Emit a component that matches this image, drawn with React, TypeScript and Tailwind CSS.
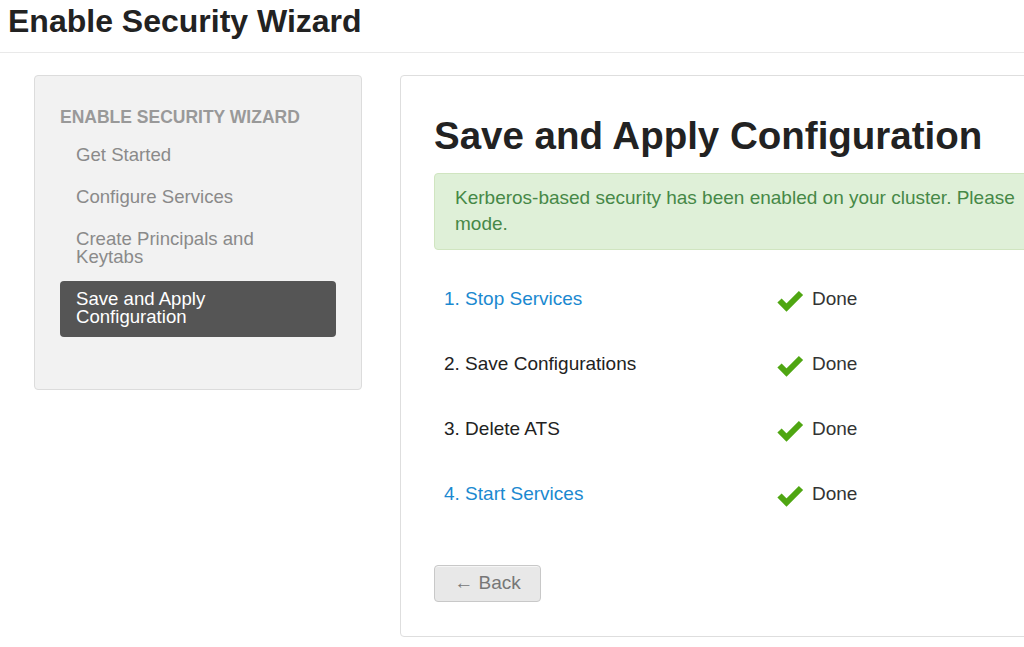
import React from 'react'

const steps = [
  { label: '1. Stop Services', link: true },
  { label: '2. Save Configurations', link: false },
  { label: '3. Delete ATS', link: false },
  { label: '4. Start Services', link: true },
]

const navItems = ['Get Started', 'Configure Services', 'Create Principals and Keytabs']

const CheckIcon = () => (
  <svg width="28" height="24" viewBox="0 0 28 24" className="shrink-0">
    <polyline
      points="3.5,12.5 10.5,19.5 25,5"
      fill="none"
      stroke="#4fa612"
      strokeWidth="6"
      strokeLinejoin="miter"
    />
  </svg>
)

const App: React.FC = () => {
  return (
    <div
      className="w-[1024px] h-[647px] overflow-hidden bg-white text-[#333]"
      style={{ fontFamily: '"Liberation Sans", Arial, sans-serif' }}
    >
      <div className="h-[53px] border-b border-[#e9e9e9] pl-2">
        <h1 className="text-[32px] font-bold leading-[42px] text-[#222]">
          Enable Security Wizard
        </h1>
      </div>

      <div className="flex pt-[22px] pl-[34px] gap-[38px]">
        {/* sidebar */}
        <div className="w-[328px] shrink-0 self-start rounded-[4px] border border-[#dcdcdc] bg-[#f2f2f2] pt-[31px] pb-[52px] px-[25px]">
          <div className="text-[17.5px] font-bold leading-[20px] text-[#999] uppercase">
            Enable Security Wizard
          </div>
          <div className="mt-[7px] flex flex-col">
            {navItems.map((item, i) => (
              <div
                key={i}
                className="py-3 pl-4 pr-16 text-[18.6px] leading-[18px] text-[#8a8a8a]"
              >
                {item}
              </div>
            ))}
            <div className="mt-[3px] rounded-[4px] bg-[#555] pl-4 pr-24 pt-[9px] pb-[11px] text-[18.6px] leading-[18px] text-white">
              Save and Apply Configuration
            </div>
          </div>
        </div>

        {/* main panel */}
        <div className="w-[720px] shrink-0 h-[562px] rounded-[4px] border border-[#dedede] bg-white pt-[39px] pl-[33px]">
          <h2 className="text-[38.5px] font-bold leading-[42px] text-[#222]">
            Save and Apply Configuration
          </h2>
          <div className="mt-4 rounded-[4px] border border-[#d0e5c0] bg-[#dff0d8] pl-5 pt-[11px] pb-3 text-[19px] leading-[26px] text-[#468847]">
            <div className="whitespace-nowrap">
              Kerberos-based security has been enabled on your cluster. Please
            </div>
            <div>mode.</div>
          </div>

          <div className="mt-[17px] flex flex-col">
            {steps.map((s, i) => (
              <div key={i} className="h-[65px] flex items-center pl-[10px]">
                <div
                  className={`w-[332px] text-[19px] ${
                    s.link ? 'text-[#1b89d0]' : 'text-[#222]'
                  }`}
                >
                  {s.label}
                </div>
                <CheckIcon />
                <span className="ml-2 text-[19px] text-[#333]">Done</span>
              </div>
            ))}
          </div>

          <button className="mt-[38px] h-[37px] w-[107px] rounded-[4px] border border-[#c8c8c8] bg-[#e8e8e8] text-[19px] text-[#777] shadow-[inset_0_1px_0_rgba(255,255,255,0.6)]">
            ← Back
          </button>
        </div>
      </div>
    </div>
  )
}

export default App
